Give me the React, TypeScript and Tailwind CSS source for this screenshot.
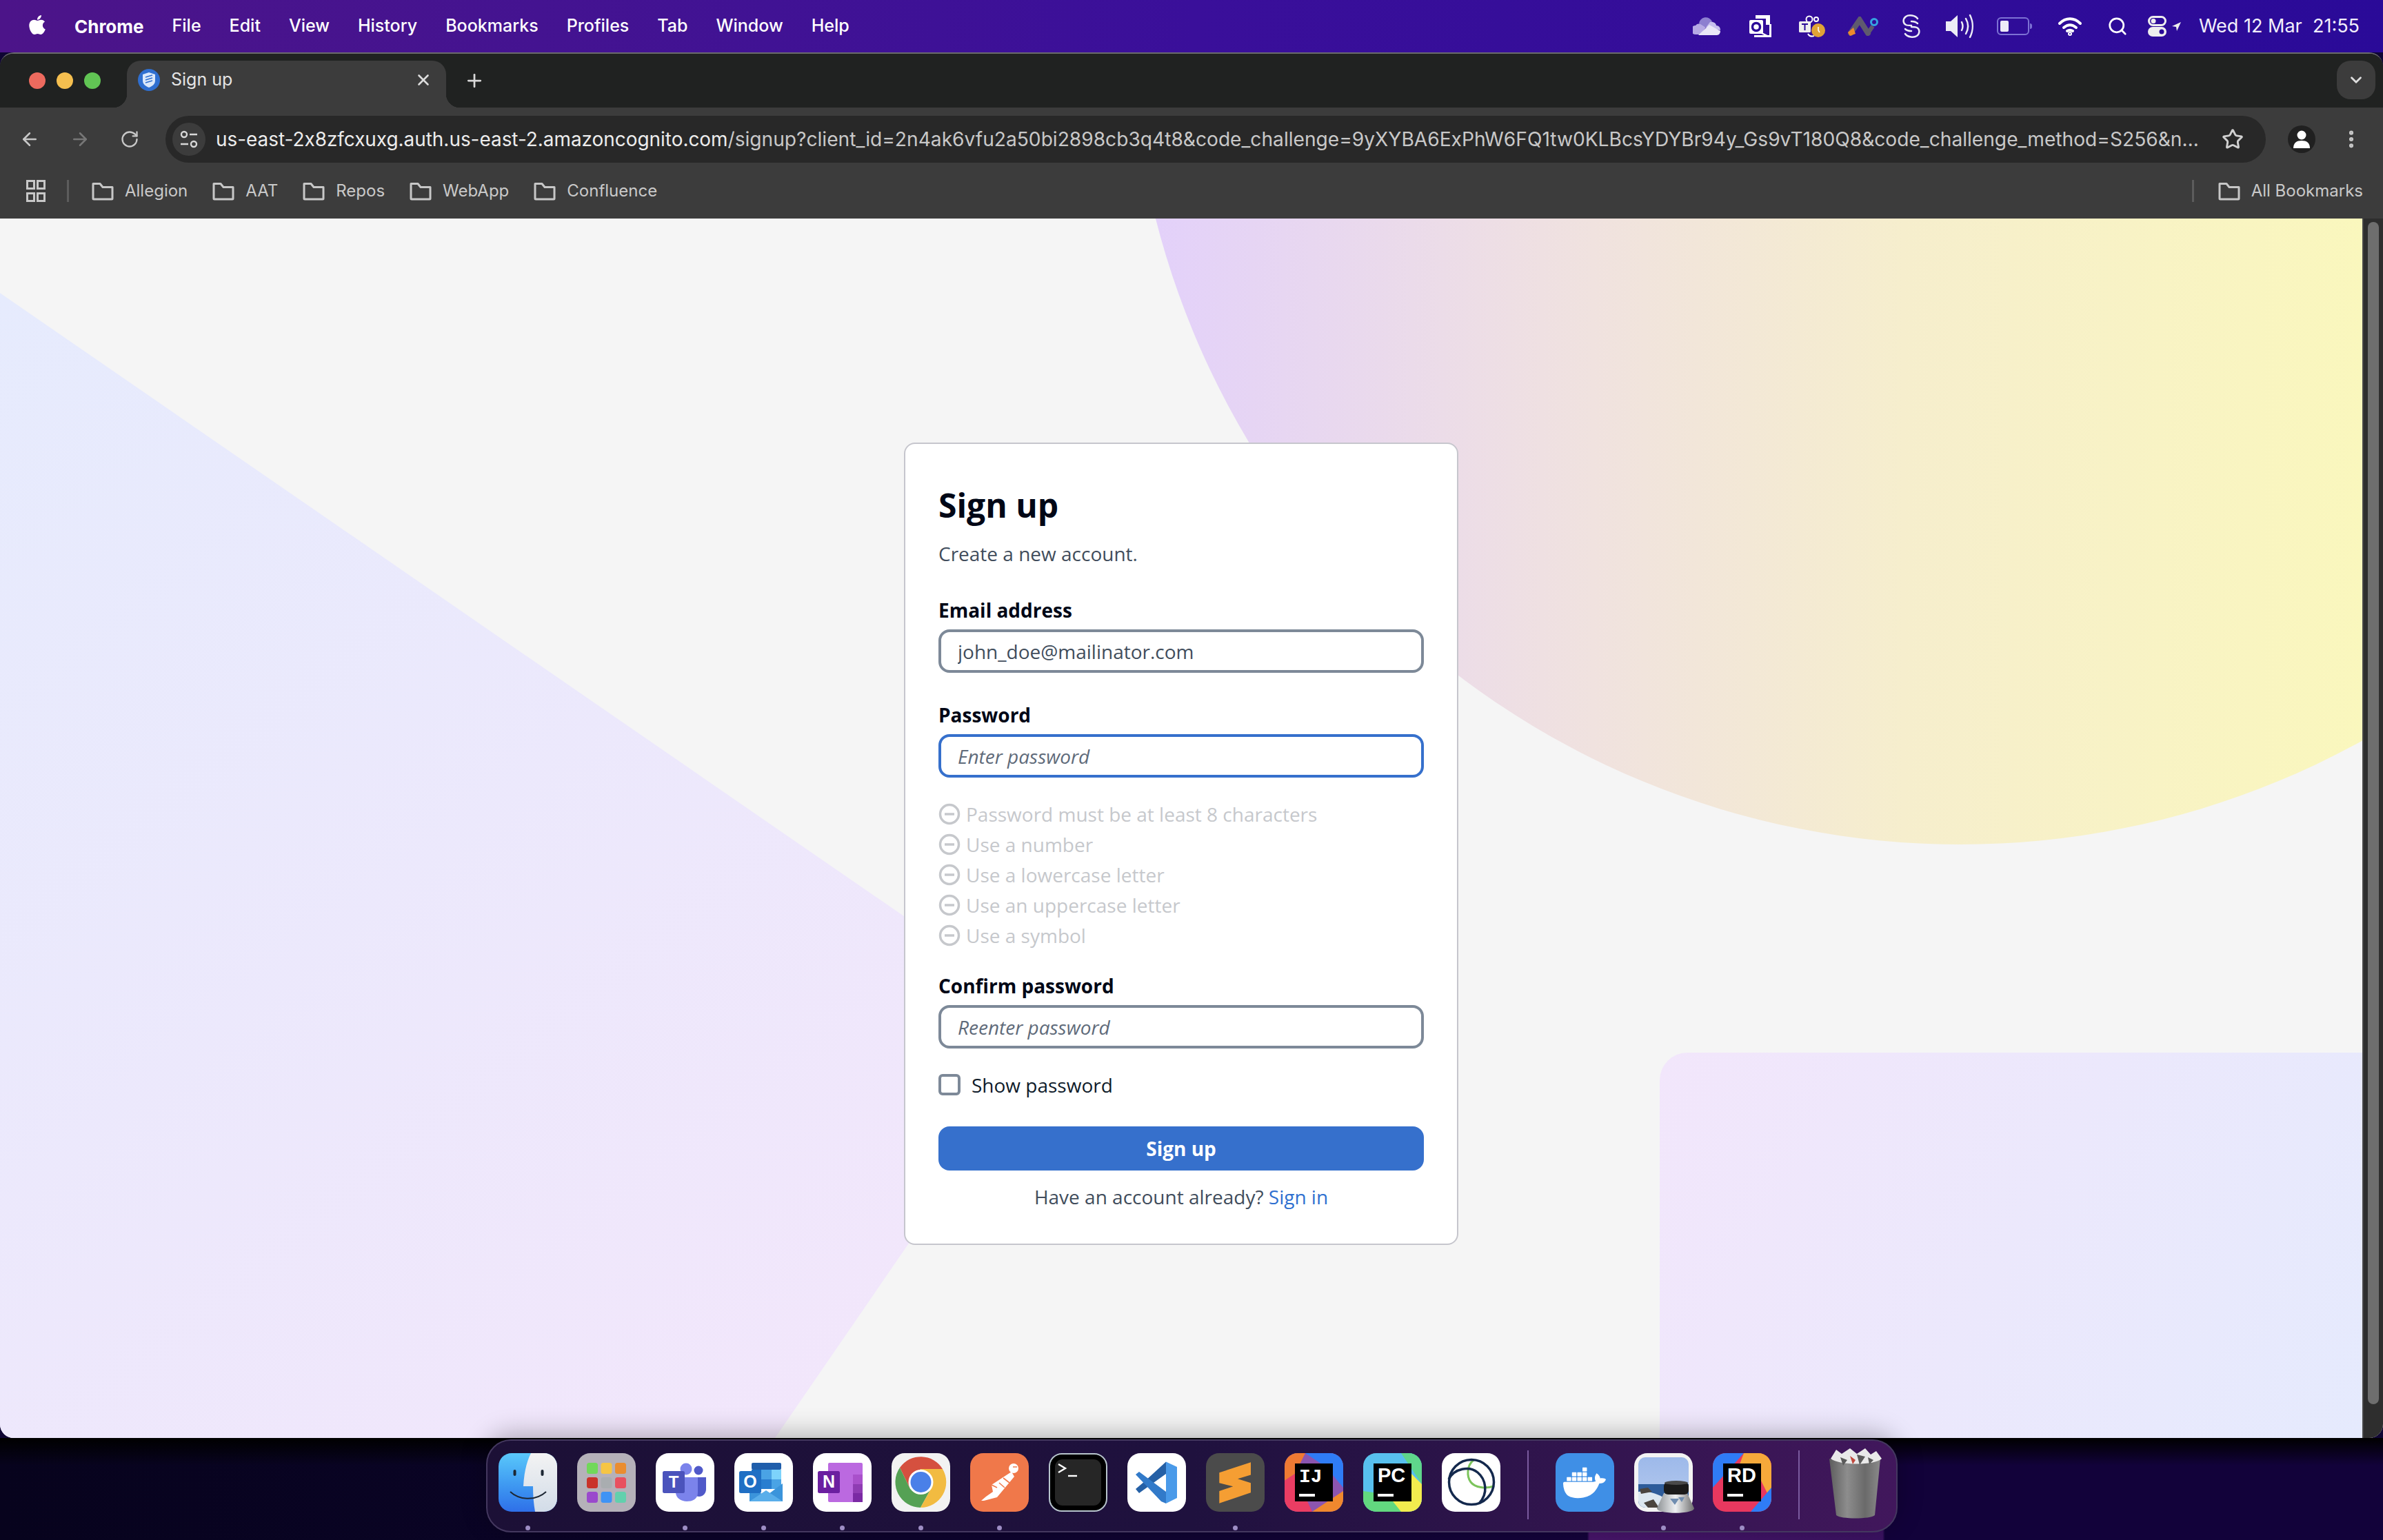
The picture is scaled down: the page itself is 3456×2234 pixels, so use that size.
import React from 'react';
import { ArrowLeft, ArrowRight, RotateCw, Star, X, Plus, ChevronDown, EllipsisVertical, Search } from 'lucide-react';
import { FaApple } from 'react-icons/fa';
import { SiDocker } from 'react-icons/si';

const menuItems = ['File', 'Edit', 'View', 'History', 'Bookmarks', 'Profiles', 'Tab', 'Window', 'Help'];
const bookmarks = ['Allegion', 'AAT', 'Repos', 'WebApp', 'Confluence'];
const rules = [
  'Password must be at least 8 characters',
  'Use a number',
  'Use a lowercase letter',
  'Use an uppercase letter',
  'Use a symbol',
];

const FolderIcon = () => (
  <svg width="32" height="28" viewBox="0 0 32 28" fill="none" stroke="#c7c7c7" strokeWidth="3" strokeLinejoin="round">
    <path d="M2 25V3.5h10l4 5h14V25a1 1 0 0 1-1 1H3a1 1 0 0 1-1-1z" />
  </svg>
);

const AppsIcon = () => (
  <svg width="28" height="32" viewBox="0 0 28 32" fill="none" stroke="#c7c7c7" strokeWidth="3">
    <rect x="1.5" y="1.5" width="10" height="11" />
    <rect x="16.5" y="1.5" width="10" height="11" />
    <rect x="1.5" y="19.5" width="10" height="11" />
    <rect x="16.5" y="19.5" width="10" height="11" />
  </svg>
);

const TrayIcons = () => (
  <div className="flex items-center">
    <svg width="40" height="28" viewBox="0 0 40 28">
      <path d="M9 10a10 10 0 0 1 19-3l-9 9-8-3z" fill="#8d7fd0" />
      <path d="M4 26a6 6 0 0 1 0-13c2-3 5-3 7-2l8 5-8 10z" fill="#b6a9e4" />
      <path d="M25 8c5-1 9 2 9 5 4 0 6 3 6 7l-15-4-6 0z" fill="#c7bfee" />
      <path d="M8 27h27c3 0 5-3 5-6l-16-9-16 15z" fill="#e9e6f7" />
    </svg>
    <svg className="ml-[42px]" width="32" height="34" viewBox="0 0 32 34">
      <path d="M9 1h21v14h-6V6H9z" fill="#fff" />
      <rect x="0" y="8" width="20" height="20" rx="2" fill="#fff" />
      <circle cx="10" cy="18" r="5.5" fill="none" stroke="#2a0a98" strokeWidth="3.5" />
      <path d="M7 30V33H32V14H29V30z" fill="#fff" />
      <path d="M14 25l14 7" stroke="#fff" strokeWidth="2" />
    </svg>
    <svg className="ml-[40px]" width="38" height="34" viewBox="0 0 38 34" fill="none">
      <circle cx="15" cy="7" r="4.5" stroke="#fff" strokeWidth="2" />
      <circle cx="25" cy="7" r="3" stroke="#fff" strokeWidth="2" />
      <rect x="0" y="10" width="17" height="16" rx="1.5" fill="#eee" />
      <path d="M4 14h9M8.5 14v9" stroke="#2a0a98" strokeWidth="2" />
      <path d="M13 28c2 4 6 4 9 3" stroke="#fff" strokeWidth="2" />
      <circle cx="28" cy="23" r="10" fill="#e0a336" />
      <path d="M28 18v5l2 3" stroke="#fff" strokeWidth="1.5" />
    </svg>
    <svg className="ml-[33px]" width="44" height="28" viewBox="0 0 44 28" fill="none">
      <path d="M4 24L17 5l12 19" stroke="#5f5a6e" strokeWidth="8" strokeLinecap="round" />
      <path d="M29 24l7-10" stroke="#5f5a6e" strokeWidth="6" />
      <path d="M0 23l8-7 3 9-8 3z" fill="#ef8a2c" />
      <circle cx="38" cy="8" r="4.5" stroke="#35a4e0" strokeWidth="3" />
    </svg>
    <svg className="ml-[35px]" width="26" height="34" viewBox="0 0 26 34" fill="none" stroke="#ececf6" strokeWidth="2.5" strokeLinecap="round">
      <path d="M22 6C19 1 9 0 5 3 0 7 1 13 5 15c2 1 5 1 8 1" />
      <path d="M13 10c4 0 7 1 9 3" />
      <path d="M4 28c3 5 13 6 17 3 5-4 4-10 0-12-2-1-5-1-8-1" />
      <path d="M13 24c-4 0-7-1-9-3" />
    </svg>
    <svg className="ml-[37px]" width="40" height="36" viewBox="0 0 40 36" fill="none">
      <path d="M0 11h7l10-9v32l-10-9H0z" fill="#ececf6" />
      <path d="M23 12c2 4 2 8 0 12M29 7c4 7 4 15 0 22M35 2c5 10 5 22 0 32" stroke="#ececf6" strokeWidth="2.5" strokeLinecap="round" />
    </svg>
    <div className="ml-[34px] flex items-center">
      <div className="flex h-[26px] w-[47px] items-center rounded-[6px] border-2 border-[#7d72d4] p-[3px]">
        <div className="h-[16px] w-[12px] rounded-[2px] bg-[#eeeaf8]" />
      </div>
      <div className="ml-[1px] h-[8px] w-[3px] rounded-r-full bg-[#7d72d4]" />
    </div>
    <svg className="ml-[37px]" width="36" height="28" viewBox="0 0 36 28" fill="none" stroke="#fff" strokeWidth="4" strokeLinecap="round">
      <path d="M3 10c9-9 21-9 30 0" />
      <path d="M9 16c6-5 12-5 18 0" />
      <path d="M14 21c3-2 5-2 8 0" />
      <circle cx="18" cy="25" r="1" />
    </svg>
    <Search className="ml-[36px]" size={30} color="#fff" strokeWidth={2.2} />
    <svg className="ml-[29px]" width="48" height="30" viewBox="0 0 48 30" fill="none">
      <rect x="1.5" y="1.5" width="24" height="12" rx="6" stroke="#eee" strokeWidth="3" />
      <circle cx="8" cy="7.5" r="3.5" fill="#eee" />
      <rect x="0" y="16" width="27" height="14" rx="7" fill="#eee" />
      <circle cx="20" cy="23" r="3.5" fill="#2a0a98" />
      <path d="M48 9L35 15l6 1 1 6z" fill="#eee" />
    </svg>
    <span className="ml-[26px] text-[27px] whitespace-pre text-[#f1eefb]">Wed 12 Mar  21:55</span>
  </div>
);

const MenuBar = () => (
  <div className="flex h-[76px] shrink-0 items-center justify-between bg-gradient-to-r from-[#4c1489] via-[#3a0f9a] to-[#2a0a98] pr-[34px] pl-[38px] text-white">
    <div className="flex items-center gap-[41px] text-[25px]">
      <div className="flex items-center gap-[38px]">
        <FaApple size={32} className="mb-[4px]" />
        <span className="text-[26px] font-bold">Chrome</span>
      </div>
      {menuItems.map((item) => (
        <span key={item} className="font-medium">{item}</span>
      ))}
    </div>
    <TrayIcons />
  </div>
);

const TabStrip = () => (
  <div className="flex h-[78px] shrink-0 items-end bg-[#202221] pr-[11px]">
    <div className="flex h-[68px] w-[184px] shrink-0 items-start gap-[16px] pt-[17px] pl-[42px]">
      <div className="h-[24px] w-[24px] rounded-full bg-[#ed6a5e]" />
      <div className="h-[24px] w-[24px] rounded-full bg-[#f5bf4f]" />
      <div className="h-[24px] w-[24px] rounded-full bg-[#61c554]" />
    </div>
    <div className="relative flex h-[68px] w-[463px] items-center rounded-t-[20px] bg-[#3c3c3c] pr-[20px] pl-[16px]">
      <div className="absolute bottom-0 left-[-20px] h-[20px] w-[20px] bg-[radial-gradient(circle_at_0_0,transparent_20px,#3c3c3c_20.5px)]" />
      <div className="absolute right-[-20px] bottom-0 h-[20px] w-[20px] bg-[radial-gradient(circle_at_100%_0,transparent_20px,#3c3c3c_20.5px)]" />
      <svg className="mb-[12px]" width="32" height="32" viewBox="0 0 32 32">
        <circle cx="16" cy="16" r="16" fill="#2f6fd0" />
        <path d="M16 5l9 3v9c0 5-4 8-9 10-5-2-9-5-9-10V8z" fill="#dbe8fa" />
        <path d="M11 12l10-3M11 16l10-3M11 20l10-3" stroke="#2f6fd0" strokeWidth="1.6" />
      </svg>
      <span className="mb-[12px] ml-[16px] text-[25px] text-[#e4e4e4]">Sign up</span>
      <X className="mb-[12px] ml-auto" size={26} color="#dcdcdc" strokeWidth={2.4} />
    </div>
    <Plus className="mb-[24px] ml-[26px]" size={30} color="#d8d8d8" strokeWidth={2.2} />
    <div className="mb-[12px] ml-auto flex h-[56px] w-[56px] items-center justify-center rounded-[20px] bg-[#3c3c3c]">
      <ChevronDown size={26} color="#dcdcdc" strokeWidth={2.6} />
    </div>
  </div>
);

const Toolbar = () => (
  <div className="flex h-[80px] shrink-0 items-end bg-[#3c3c3c] pr-[30px] pl-[28px]">
    <div className="flex h-[68px] items-center gap-[43px]">
      <ArrowLeft size={30} color="#c7c7c7" strokeWidth={2} />
      <ArrowRight size={30} color="#777777" strokeWidth={2} />
      <RotateCw size={28} color="#c7c7c7" strokeWidth={2} />
    </div>
    <div className="ml-[38px] flex h-[68px] w-[3050px] items-center rounded-full bg-[#282828] pr-[32px] pl-[10px]">
      <div className="flex h-[48px] w-[48px] shrink-0 items-center justify-center rounded-full bg-[#3c3c3c]">
        <svg width="28" height="28" viewBox="0 0 28 28" fill="none" stroke="#d8d8d8" strokeWidth="2.4">
          <circle cx="7" cy="7" r="4" />
          <path d="M15 7h11M2 21h11" />
          <circle cx="21" cy="21" r="4" />
        </svg>
      </div>
      <div className="ml-[15px] text-[28.15px] whitespace-nowrap text-[#c8c8c8] [font-variant-ligatures:none] [font-feature-settings:'calt'_0]">
        <span className="text-[27.9px] text-[#ececec]">us-east-2x8zfcxuxg.auth.us-east-2.amazoncognito.com</span>
        /signup?client_id=2n4ak6vfu2a50bi2898cb3q4t8&amp;code_challenge=9yXYBA6ExPhW6FQ1tw0KLBcsYDYBr94y_Gs9vT180Q8&amp;code_challenge_method=S256&amp;n…
      </div>
      <Star className="ml-auto shrink-0" size={32} color="#d0d0d0" strokeWidth={2.2} />
    </div>
    <div className="ml-[32px] flex h-[68px] items-center">
      <div className="flex h-[40px] w-[40px] items-center justify-center overflow-hidden rounded-full bg-[#202020]">
        <svg width="28" height="30" viewBox="0 0 28 30" fill="#fff">
          <circle cx="14" cy="9" r="6.5" />
          <path d="M2 28c0-8 5-11 12-11s12 3 12 11z" />
        </svg>
      </div>
      <EllipsisVertical className="ml-[36px]" size={32} color="#c7c7c7" strokeWidth={2.6} />
    </div>
  </div>
);

const BookmarksBar = () => (
  <div className="flex h-[81px] shrink-0 items-center bg-[#3c3c3c] pr-[29px] pl-[38px] text-[24px] text-[#c9c9c9]">
    <AppsIcon />
    <div className="mr-[33px] ml-[31px] h-[32px] w-[3px] bg-[#5c5c5c]" />
    <div className="flex items-center gap-[36px]">
      {bookmarks.map((name) => (
        <div key={name} className="flex items-center gap-[16px]">
          <FolderIcon />
          <span>{name}</span>
        </div>
      ))}
    </div>
    <div className="mr-[35px] ml-auto h-[32px] w-[3px] bg-[#5c5c5c]" />
    <div className="flex items-center gap-[16px]">
      <FolderIcon />
      <span>All Bookmarks</span>
    </div>
  </div>
);

const Backdrop = () => (
  <svg className="absolute inset-0" width="3426" height="1769" viewBox="0 0 3426 1769">
    <defs>
      <linearGradient id="sun" gradientUnits="userSpaceOnUse" x1="1675" y1="0" x2="3426" y2="0">
        <stop offset="0" stopColor="#e3d1fa" />
        <stop offset="0.32" stopColor="#efe0e2" />
        <stop offset="0.62" stopColor="#f6eecd" />
        <stop offset="1" stopColor="#faf7bd" />
      </linearGradient>
      <linearGradient id="wedge" gradientUnits="userSpaceOnUse" x1="0" y1="108" x2="1300" y2="1700">
        <stop offset="0" stopColor="#e6ebfd" />
        <stop offset="1" stopColor="#f2e6fb" />
      </linearGradient>
      <linearGradient id="block" gradientUnits="userSpaceOnUse" x1="2407" y1="1210" x2="3426" y2="1769">
        <stop offset="0" stopColor="#f2e6fb" />
        <stop offset="1" stopColor="#e5eafd" />
      </linearGradient>
    </defs>
    <circle cx="2843" cy="-296" r="1204" fill="url(#sun)" />
    <polygon points="0,108 1537,1168 1124,1769 0,1769" fill="url(#wedge)" />
    <rect x="2407" y="1210" width="1100" height="700" rx="40" fill="url(#block)" />
  </svg>
);

const fieldClass =
  "h-[63px] w-full rounded-[16px] border-4 border-[#7d8998] bg-white px-[24px] text-[28px] text-[#414d5c] outline-none placeholder:text-[#5f6b7a] placeholder:italic";

const SignUpCard = () => (
  <div className="relative h-[1164px] w-[804px] rounded-[16px] border-2 border-[#c6c6cd] bg-white px-[48px] pt-[59px] font-['Open_Sans',sans-serif] text-[28px] leading-[40px]">
    <h1 className="text-[48px] leading-[60px] font-bold text-[#000716]">Sign up</h1>
    <p className="mt-[20px] text-[#414d5c]">Create a new account.</p>
    <label className="mt-[42px] mb-[8px] block font-bold text-[#000716]">Email address</label>
    <input className={fieldClass} defaultValue="john_doe@mailinator.com" />
    <label className="mt-[41px] mb-[8px] block font-bold text-[#000716]">Password</label>
    <input className={`${fieldClass} border-[#3670cc]`} placeholder="Enter password" />
    <ul className="mt-[31px]">
      {rules.map((rule) => (
        <li key={rule} className="flex h-[44px] items-center gap-[8px] text-[#c6c8cc]">
          <svg width="32" height="32" viewBox="0 0 32 32" fill="none" stroke="#c6c8cc" strokeWidth="3.5">
            <circle cx="16" cy="16" r="13.5" />
            <path d="M9 16h14" />
          </svg>
          {rule}
        </li>
      ))}
    </ul>
    <label className="mt-[31px] mb-[8px] block font-bold text-[#000716]">Confirm password</label>
    <input className={fieldClass} placeholder="Reenter password" />
    <div className="mt-[37px] flex h-[31px] items-center gap-[16px] text-[#0f1b2a]">
      <div className="h-[31px] w-[32px] rounded-[6px] border-4 border-[#7d8998]" />
      Show password
    </div>
    <button className="mt-[45px] h-[64px] w-full rounded-[16px] bg-[#3670cc] text-[28px] font-bold text-white">Sign up</button>
    <p className="mt-[18px] text-center text-[#414d5c]">
      Have an account already? <span className="text-[#2f70d0]">Sign in</span>
    </p>
  </div>
);

const BrowserWindow = () => (
  <div className="flex h-[2010px] shrink-0 flex-col overflow-hidden rounded-[20px] border-t-2 border-[#6b6b6b]">
    <TabStrip />
    <Toolbar />
    <BookmarksBar />
    <div className="flex min-h-0 flex-1 bg-[#f5f5f5]">
      <div className="relative flex flex-1 justify-center overflow-hidden pt-[325px]">
        <Backdrop />
        <SignUpCard />
      </div>
      <div className="w-[30px] shrink-0 border-l-2 border-[#454545] bg-[#2e2e2e] pt-[5px]">
        <div className="mx-auto h-[1715px] w-[16px] rounded-full bg-[#6e6e6e]" />
      </div>
    </div>
  </div>
);

const IconBox = ({ className, children }: { className: string; children: React.ReactNode }) => (
  <div className={`h-[85px] w-[85px] overflow-hidden rounded-[19px] ${className}`}>
    <svg width="85" height="85" viewBox="0 0 85 85">{children}</svg>
  </div>
);

const Finder = () => (
  <IconBox className="bg-gradient-to-b from-[#5ac8fa] to-[#2f6fe8]">
    <defs>
      <linearGradient id="finderFace" x1="0" y1="0" x2="0" y2="1">
        <stop offset="0" stopColor="#f3f3f3" />
        <stop offset="1" stopColor="#d2dce8" />
      </linearGradient>
    </defs>
    <path d="M47 0C40 14 37 30 36 48h14c0 14 1 26 3 37h32V0z" fill="url(#finderFace)" />
    <rect x="21.5" y="24" width="4" height="9" rx="2" fill="#1d2733" />
    <rect x="61.5" y="24" width="4" height="9" rx="2" fill="#1d2733" />
    <path d="M17 56c14 13 38 13 52 0" fill="none" stroke="#1d2733" strokeWidth="2" />
  </IconBox>
);

const Launchpad = () => {
  const colors = ['#71d85a', '#f6c544', '#ea8d30', '#c9322a', '#a9adb0', '#e8505f', '#9a49cc', '#3f93f5', '#62d0ad'];
  return (
    <IconBox className="bg-[#b5b1b9]">
      {colors.map((color, i) => (
        <rect key={color} x={14 + (i % 3) * 20.5} y={14 + Math.floor(i / 3) * 21} width="16" height="16" rx="3.5" fill={color} />
      ))}
    </IconBox>
  );
};

const Teams = () => (
  <IconBox className="bg-white">
    <circle cx="44" cy="23" r="8.5" fill="#7b83eb" />
    <circle cx="62" cy="25" r="6.5" fill="#5059c9" />
    <path d="M52 35h21v17c0 7-5 11-10 11s-11-5-11-11z" fill="#5059c9" />
    <path d="M29 35h32v22c0 10-8 13-16 13s-16-5-16-13z" fill="#7b83eb" />
    <rect x="10" y="26" width="32" height="32" rx="2.5" fill="#4b53bc" />
    <text x="26" y="50" textAnchor="middle" fontSize="24" fontWeight="700" fill="#fff" fontFamily="Liberation Sans">T</text>
  </IconBox>
);

const Outlook = () => (
  <IconBox className="bg-white">
    <rect x="25" y="14" width="43" height="10" rx="2" fill="#1f5eab" />
    <rect x="25" y="24" width="15" height="14" fill="#1b6fc4" />
    <rect x="39" y="24" width="15" height="14" fill="#4aa3e5" />
    <rect x="54" y="24" width="14" height="14" fill="#7dd3fb" />
    <rect x="25" y="38" width="15" height="14" fill="#1b5faf" />
    <rect x="39" y="38" width="15" height="14" fill="#2a7ed0" />
    <rect x="54" y="38" width="14" height="14" fill="#4aa3e5" />
    <path d="M22 50l24 12 24-18v26H22z" fill="#3b94db" />
    <path d="M22 70l24-16 24 16z" fill="#59aeea" />
    <rect x="7" y="26" width="32" height="32" rx="2.5" fill="#1f6fc4" />
    <text x="23" y="50" textAnchor="middle" fontSize="25" fontWeight="700" fill="#fff" fontFamily="Liberation Sans">O</text>
  </IconBox>
);

const OneNote = () => (
  <IconBox className="bg-white">
    <rect x="22" y="14" width="50" height="57" rx="2" fill="#bb69e0" />
    <rect x="58" y="31" width="14" height="14" fill="#a950cb" />
    <rect x="58" y="45" width="14" height="13" fill="#8f3cb3" />
    <rect x="58" y="58" width="14" height="13" fill="#7a29a3" />
    <rect x="7" y="26" width="32" height="32" rx="2.5" fill="#6b1fa0" />
    <text x="23" y="50" textAnchor="middle" fontSize="25" fontWeight="700" fill="#fff" fontFamily="Liberation Sans">N</text>
  </IconBox>
);

const Chrome = () => (
  <IconBox className="bg-[#f2f2f2]">
    <path d="M12 21A37 37 0 0 1 74 23H42L27 52Z" fill="#d5503f" />
    <path d="M12 21A37 37 0 0 0 42 79L57 52H27Z" fill="#55a154" />
    <path d="M74 23A37 37 0 0 1 42 79L57 52 42 23Z" fill="#f2bb41" />
    <circle cx="42.5" cy="42" r="18" fill="#fff" />
    <circle cx="42.5" cy="42" r="15" fill="#4a80e8" />
  </IconBox>
);

const Postman = () => (
  <IconBox className="bg-[#f0784a]">
    <circle cx="63" cy="22" r="7" fill="#fff" />
    <path d="M60 27L64 34 39 64 20 69 16 69 23 63 33 56 31 46z" fill="#fff" />
    <path d="M48 36l9 7M42 43l8 7M31 46l8 4" stroke="#f0784a" strokeWidth="1.6" />
    <path d="M62 20h6" stroke="#f0784a" strokeWidth="1.5" />
  </IconBox>
);

const Terminal = () => (
  <div className="h-[85px] w-[85px] rounded-[19px] border-2 border-[#b7c4cc] bg-black p-[7px]">
    <div className="relative h-full w-full rounded-[11px] bg-[#262626]">
      <svg className="absolute top-[5px] left-[4px]" width="34" height="26" viewBox="0 0 34 26" fill="none" stroke="#fff" strokeWidth="2.4">
        <path d="M1 2l10 6-10 6" />
        <path d="M15 19h13" />
      </svg>
    </div>
  </div>
);

const VsCode = () => (
  <IconBox className="bg-white">
    <path d="M56 12.5L72 20v45l-16 8z" fill="#4a9ae9" />
    <path d="M56 12.5L25 41 12 52l5 6L56 30z" fill="#2560a6" />
    <path d="M12 31l5-4 39 29v17l-7-3z" fill="#327ac9" />
  </IconBox>
);

const Sublime = () => (
  <IconBox className="bg-[#4b4b4b]">
    <polygon points="19.3,28.3 65,13.3 65,31.6 46,37.3 65,43.3 65,57.3 19.3,72.7 19.3,55 39.3,48.3 19.3,43.3" fill="#f59e33" />
  </IconBox>
);

const JetBrains = ({ label, bg }: { label: string; bg: React.ReactNode }) => (
  <IconBox className="bg-[#444]">
    {bg}
    <rect x="15" y="15" width="55" height="55" fill="#000" />
    <text x="21" y="42" fontSize={label === 'IJ' ? 28 : 29} fontWeight="700" fill="#fff" fontFamily={label === 'IJ' ? 'Liberation Mono' : 'Liberation Sans'}>{label}</text>
    <rect x="21" y="59" width="23" height="4" fill="#fff" />
  </IconBox>
);

const ijBg = (
  <>
    <rect width="85" height="85" fill="#8c55b0" />
    <polygon points="30,0 85,0 85,50 60,20" fill="#2f7cf6" />
    <polygon points="0,0 30,0 15,30 0,40" fill="#ef7a33" />
    <polygon points="0,40 15,30 40,85 0,85" fill="#ea3d63" />
    <polygon points="40,85 85,55 85,85" fill="#f0882e" />
  </>
);

const pcBg = (
  <>
    <rect width="85" height="85" fill="#58c0ee" />
    <polygon points="55,0 85,0 85,45" fill="#5fd68b" />
    <polygon points="85,45 70,30 35,70 50,85 85,85" fill="#f2ec4e" />
    <polygon points="0,55 35,60 55,85 0,85" fill="#62d87f" />
  </>
);

const rdBg = (
  <>
    <rect width="85" height="85" fill="#e8385f" />
    <polygon points="0,0 45,0 0,50" fill="#2f7cf6" />
    <polygon points="45,0 85,0 85,70 70,40 30,40" fill="#f6a93a" />
    <polygon points="85,50 85,85 55,85" fill="#2f7cf6" />
  </>
);

const Ring = () => (
  <IconBox className="bg-white">
    <path d="M46 10C36 18 36 34 42 42c6 8 22 10 33 6" fill="none" stroke="#7cc45c" strokeWidth="3" />
    <circle cx="43" cy="42" r="32.5" fill="none" stroke="#14294d" strokeWidth="3.5" />
    <path d="M10 38C18 22 40 18 52 28c12 10 16 30 2 45" fill="none" stroke="#14294d" strokeWidth="3.5" />
  </IconBox>
);

const Docker = () => (
  <div className="flex h-[85px] w-[85px] items-center justify-center rounded-[19px] bg-[#3f8fe6]">
    <SiDocker size={62} color="#fff" />
  </div>
);

const Preview = () => (
  <svg className="overflow-visible" width="85" height="85" viewBox="0 0 85 85">
    <defs>
      <linearGradient id="glass" x1="0" y1="0" x2="1" y2="0">
        <stop offset="0" stopColor="#8f9396" />
        <stop offset="0.5" stopColor="#eef0f2" />
        <stop offset="1" stopColor="#6f6f6f" />
      </linearGradient>
      <linearGradient id="sky" x1="0" y1="0" x2="0" y2="1">
        <stop offset="0" stopColor="#9db9ea" />
        <stop offset="1" stopColor="#b7cbee" />
      </linearGradient>
    </defs>
    <rect width="85" height="85" rx="19" fill="#f3f3f3" />
    <rect x="6" y="6" width="73" height="73" rx="10" fill="url(#sky)" />
    <path d="M6 45h73v24a10 10 0 0 1-10 10H16A10 10 0 0 1 6 69z" fill="#2e5c9a" />
    <path d="M6 56c12-2 26 2 40 10v13H16A10 10 0 0 1 6 69z" fill="#dce7f0" />
    <path d="M8 52l12-2 6 6-16 3zM14 72l14-5 8 12H20z" fill="#4b453f" />
    <path d="M43 58h34l10 22c0 9-54 9-54 0z" fill="url(#glass)" />
    <rect x="43" y="42" width="36" height="18" rx="6" fill="#1b1b1b" />
    <ellipse cx="61" cy="43" rx="17" ry="3" fill="#4a4a4a" />
    <path d="M52 66l7 9 6-9zM64 64l5 7 4-7z" fill="#6f8db0" />
  </svg>
);

const Trash = () => (
  <svg className="overflow-visible" width="85" height="85" viewBox="0 0 85 85">
    <defs>
      <linearGradient id="bin" x1="0" y1="0" x2="1" y2="0">
        <stop offset="0" stopColor="#5d5d5d" />
        <stop offset="0.35" stopColor="#8d8d8d" />
        <stop offset="0.7" stopColor="#6a6a6a" />
        <stop offset="1" stopColor="#8a8a8a" />
      </linearGradient>
    </defs>
    <path d="M4 8c16 6 58 6 74 0l-8 82c-6 6-50 6-56 0z" fill="url(#bin)" />
    <path d="M6 8L14-5l8 6 12-8 10 8 12-8 8 9 8-5 8 11c-10 10-62 10-74 0z" fill="#e9e9e9" />
    <path d="M20 6l4 12 6-8zM44 2l4 15 8-12zM60 6l2 10 6-6z" fill="#5b5b5b" />
    <path d="M34 4l4 12 4-6z" fill="#c0483c" />
  </svg>
);

const DockItem = ({ running, children }: { running?: boolean; children: React.ReactNode }) => (
  <div className="flex w-[85px] flex-col items-center">
    {children}
    <div className={`mt-[20px] h-[7px] w-[7px] rounded-full ${running ? 'bg-[#9d8dc4]' : 'bg-transparent'}`} />
  </div>
);

const DockDivider = () => <div className="mx-[10px] mt-[-4px] h-[100px] w-[2px] bg-[#7a5b9e]" />;

const Dock = () => (
  <div className="relative flex h-[148px] shrink-0 justify-center bg-[linear-gradient(180deg,#000_0,transparent_40px),linear-gradient(90deg,#07031d_0%,#0b0428_30%,#14043a_66.6%,#461568_66.7%,#3a1260_79%,#12023a_79.1%)] pt-[2px]">
    <div className="flex h-[135px] w-[2047px] gap-[29px] rounded-[36px] border-2 border-[#44385f] bg-gradient-to-r from-[#1c1036] via-[#1f113e] to-[#41175c] pt-[18px] pl-[16px] shadow-[0_-8px_36px_rgba(0,0,0,0.28)]">
      <DockItem running><Finder /></DockItem>
      <DockItem><Launchpad /></DockItem>
      <DockItem running><Teams /></DockItem>
      <DockItem running><Outlook /></DockItem>
      <DockItem running><OneNote /></DockItem>
      <DockItem running><Chrome /></DockItem>
      <DockItem running><Postman /></DockItem>
      <DockItem><Terminal /></DockItem>
      <DockItem><VsCode /></DockItem>
      <DockItem running><Sublime /></DockItem>
      <DockItem><JetBrains label="IJ" bg={ijBg} /></DockItem>
      <DockItem><JetBrains label="PC" bg={pcBg} /></DockItem>
      <DockItem><Ring /></DockItem>
      <DockDivider />
      <DockItem><Docker /></DockItem>
      <DockItem running><Preview /></DockItem>
      <DockItem running><JetBrains label="RD" bg={rdBg} /></DockItem>
      <DockDivider />
      <DockItem><Trash /></DockItem>
    </div>
  </div>
);

export default function App() {
  return (
    <div className="flex h-[2234px] w-[3456px] flex-col overflow-hidden bg-[#0f0533] font-['Inter',sans-serif]">
      <MenuBar />
      <BrowserWindow />
      <Dock />
    </div>
  );
}
